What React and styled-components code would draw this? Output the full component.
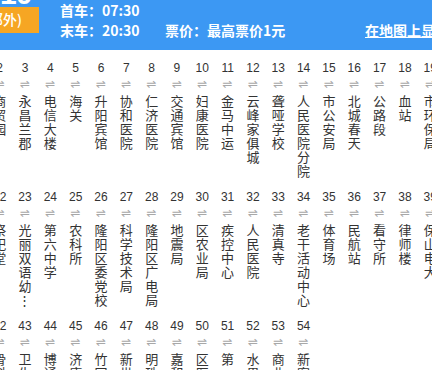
import React from "react";
import styled, { createGlobalStyle } from "styled-components";

const GlobalStyle = createGlobalStyle`
  html, body {
    margin: 0;
    padding: 0;
    overflow: hidden;
    background: #fff;
  }
  body {
    font-family: "Noto Sans CJK SC", "Liberation Sans", sans-serif;
  }
`;

const Header = styled.div`
  display: flex;
  align-items: flex-start;
  height: 50px;
  background: #3c98f3;
  color: #fff;
  overflow: hidden;
  font-size: 14px;
  font-weight: 600;
  line-height: 20px;
`;

const Badge = styled.div`
  flex-shrink: 0;
  display: flex;
  flex-direction: column;
  margin-left: -40px;
  width: 79px;
`;

const RouteNo = styled.div`
  font: bold 30px/30px "Liberation Sans", Arial, sans-serif;
  margin-top: -21px;
  margin-bottom: -2px;
  padding-left: 40px;
  letter-spacing: -1px;
`;

const Tag = styled.div`
  height: 26px;
  line-height: 24px;
  background: #f6a623;
  padding-left: 24px;
  font-size: 14px;
  font-weight: 500;
`;

const InfoCol = styled.div`
  flex-shrink: 0;
  display: flex;
  flex-direction: column;
  margin-left: ${(p) => p.$gap}px;
  width: ${(p) => p.$w}px;
  padding-top: ${(p) => (p.$low ? 20 : 0)}px;
  white-space: nowrap;
`;

const MapLink = styled.a`
  color: #fff;
  text-decoration: underline;
  white-space: nowrap;
`;

const Board = styled.div`
  padding-top: 11px;
`;

const Row = styled.ul`
  display: flex;
  margin: 0 0 0 -38.33px;
  padding: 0;
  list-style: none;
  height: 129px;
`;

const Stop = styled.li`
  flex: 0 0 25.33px;
  display: flex;
  flex-direction: column;
  align-items: center;
`;

const Num = styled.span`
  font: 12px/14px "Liberation Sans", Arial, sans-serif;
  color: #333;
  height: 14px;
`;

const Arrow = styled.span`
  font: 12px/19px "DejaVu Sans", sans-serif;
  color: #a8a8a8;
  height: 19px;
`;

const Name = styled.div`
  display: flex;
  flex-direction: column;
  align-items: center;
  color: #333;
  font-size: 13px;
  line-height: 14px;
`;

const Char = styled.span`
  display: block;
  height: 14px;
`;

const rows = [
  [
    "汽车站", "商贸园", "永昌兰郡", "电信大楼", "海关", "升阳宾馆", "协和医院",
    "仁济医院", "交通宾馆", "妇康医院", "金马中运", "云峰家俱城", "聋哑学校",
    "人民医院分院", "市公安局", "北城春天", "公路段", "血站", "市环保局", "太保山",
  ],
  [
    "易罗池", "祭祀堂", "光丽双语幼⋮", "第六中学", "农科所", "隆阳区委党校",
    "科学技术局", "隆阳区广电局", "地震局", "区农业局", "疾控中心", "人民医院",
    "清真寺", "老干活动中心", "体育场", "民航站", "看守所", "律师楼", "保山电大", "青华海",
  ],
  [
    "九龙池", "骨科医院", "卫生学校", "博通国际", "济康医院", "竹园村", "新世纪",
    "明珠广场", "嘉和苑", "区医院", "第一中学", "水果市场", "商业城", "新客运站",
  ],
];

export default function App() {
  return (
    <>
      <GlobalStyle />
      <Header>
        <Badge>
          <RouteNo>10</RouteNo>
          <Tag>(郊外)</Tag>
        </Badge>
        <InfoCol $gap={21} $w={105}>
          <span>首车：07:30</span>
          <span>末车：20:30</span>
        </InfoCol>
        <InfoCol $gap={0} $w={200} $low>
          <span>票价：最高票价1元</span>
        </InfoCol>
        <InfoCol $gap={0} $w={120} $low>
          <MapLink>在地图上显示</MapLink>
        </InfoCol>
      </Header>
      <Board>
        {rows.map((row, r) => (
          <Row key={r}>
            {row.map((name, i) => (
              <Stop key={i}>
                <Num>{r * 20 + i + 1}</Num>
                <Arrow>⇌</Arrow>
                <Name>
                  {Array.from(name).map((c, j) => (
                    <Char key={j}>{c}</Char>
                  ))}
                </Name>
              </Stop>
            ))}
          </Row>
        ))}
      </Board>
    </>
  );
}
